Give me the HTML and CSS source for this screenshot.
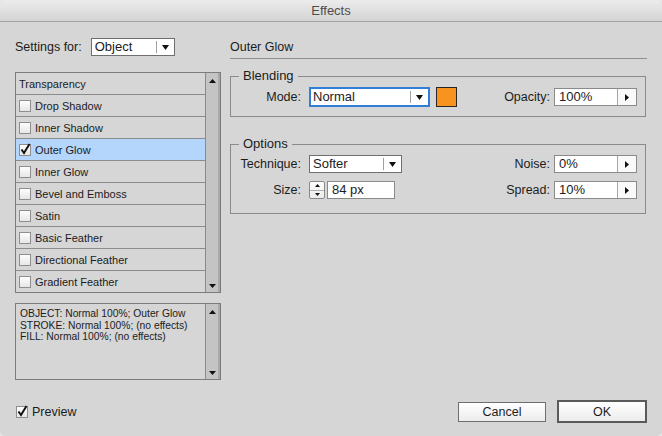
FILE: index.html
```html
<!DOCTYPE html>
<html lang="en">
<head>
    <meta charset="UTF-8">
    <title>Effects</title>
    <link rel="stylesheet" href="styles.css">
</head>
<body>
    <div class="window">
        <div class="titlebar">Effects</div>

        <div class="content">
            <!-- left column: target + effect list + summary -->
            <div class="left">
                <div class="settings">
                    <span class="label">Settings for:</span>
                    <div class="select select-settings">
                        <span class="select-value">Object</span>
                        <span class="select-sep"></span>
                        <span class="select-arrow"><svg width="7" height="5"><polygon points="0,0 7,0 3.5,5"/></svg></span>
                    </div>
                </div>

                <div class="list">
                    <div class="list-items">
                        <div class="row">Transparency</div>
                        <div class="row"><span class="check"></span>Drop Shadow</div>
                        <div class="row"><span class="check"></span>Inner Shadow</div>
                        <div class="row selected"><span class="check checked"><svg width="12" height="12"><path d="M2.5 5.5 L5 9 L10.5 0"/></svg></span>Outer Glow</div>
                        <div class="row"><span class="check"></span>Inner Glow</div>
                        <div class="row"><span class="check"></span>Bevel and Emboss</div>
                        <div class="row"><span class="check"></span>Satin</div>
                        <div class="row"><span class="check"></span>Basic Feather</div>
                        <div class="row"><span class="check"></span>Directional Feather</div>
                        <div class="row"><span class="check"></span>Gradient Feather</div>
                    </div>
                    <div class="scrollbar">
                        <svg width="7" height="4"><polygon points="3.5,0 7,4 0,4"/></svg>
                        <svg width="7" height="4"><polygon points="0,0 7,0 3.5,4"/></svg>
                    </div>
                </div>

                <div class="summary">
                    <div class="summary-text">
                        OBJECT: Normal 100%; Outer Glow<br>
                        STROKE: Normal 100%; (no effects)<br>
                        FILL: Normal 100%; (no effects)
                    </div>
                    <div class="scrollbar">
                        <svg width="7" height="4"><polygon points="3.5,0 7,4 0,4"/></svg>
                        <svg width="7" height="4"><polygon points="0,0 7,0 3.5,4"/></svg>
                    </div>
                </div>
            </div>

            <!-- right column: outer glow settings -->
            <div class="right">
                <h2 class="heading">Outer Glow</h2>

                <fieldset class="group group-blending">
                    <legend>Blending</legend>
                    <div class="line line-tall">
                        <div class="pair">
                            <span class="label label-col">Mode:</span>
                            <div class="select select-mode">
                                <span class="select-value">Normal</span>
                                <span class="select-sep"></span>
                                <span class="select-arrow"><svg width="7" height="5"><polygon points="0,0 7,0 3.5,5"/></svg></span>
                            </div>
                            <span class="swatch"></span>
                        </div>
                        <div class="pair pair-right">
                            <span class="label">Opacity:</span>
                            <div class="field">
                                <span class="field-value">100%</span>
                                <span class="field-btn"><svg width="4" height="7"><polygon points="0,0 4,3.5 0,7"/></svg></span>
                            </div>
                        </div>
                    </div>
                </fieldset>

                <fieldset class="group group-options">
                    <legend>Options</legend>
                    <div class="line">
                        <div class="pair">
                            <span class="label label-col">Technique:</span>
                            <div class="select select-technique">
                                <span class="select-value">Softer</span>
                                <span class="select-sep"></span>
                                <span class="select-arrow"><svg width="7" height="5"><polygon points="0,0 7,0 3.5,5"/></svg></span>
                            </div>
                        </div>
                        <div class="pair pair-right">
                            <span class="label">Noise:</span>
                            <div class="field">
                                <span class="field-value">0%</span>
                                <span class="field-btn"><svg width="4" height="7"><polygon points="0,0 4,3.5 0,7"/></svg></span>
                            </div>
                        </div>
                    </div>
                    <div class="line">
                        <div class="pair">
                            <span class="label label-col">Size:</span>
                            <div class="spinner">
                                <span class="spin"><svg width="5" height="3"><polygon points="2.5,0 5,3 0,3"/></svg></span>
                                <span class="spin"><svg width="5" height="3"><polygon points="0,0 5,0 2.5,3"/></svg></span>
                            </div>
                            <div class="field field-size">
                                <span class="field-value">84 px</span>
                            </div>
                        </div>
                        <div class="pair pair-right">
                            <span class="label">Spread:</span>
                            <div class="field">
                                <span class="field-value">10%</span>
                                <span class="field-btn"><svg width="4" height="7"><polygon points="0,0 4,3.5 0,7"/></svg></span>
                            </div>
                        </div>
                    </div>
                </fieldset>
            </div>
        </div>

        <div class="footer">
            <div class="preview">
                <span class="check checked"><svg width="12" height="12"><path d="M2.5 5.5 L5 9 L10.5 0"/></svg></span>
                <span class="label">Preview</span>
            </div>
            <div class="buttons">
                <button class="button">Cancel</button>
                <button class="button button-default">OK</button>
            </div>
        </div>
    </div>
</body>
</html>
```

FILE: styles.css
```css
body {
    margin: 0;
    background: #e6e6e6;
    font-family: "Liberation Sans", Arial, sans-serif;
    color: #1c1c1c;
}

.window {
    width: 662px;
    height: 436px;
    background: #d6d6d6;
    border-radius: 5px;
    overflow: hidden;
    display: flex;
    flex-direction: column;
}

.titlebar {
    height: 21px;
    line-height: 21px;
    border-bottom: 1px solid #a4a4a4;
    background: linear-gradient(#ececec, #d4d4d4);
    text-align: center;
    font-size: 13px;
    color: #4d4d4d;
}

.content {
    display: flex;
    gap: 9px;
    padding: 16px 15px 0;
}

.left {
    width: 206px;
}

.right {
    width: 417px;
}

.label {
    font-size: 12.5px;
    color: #1c1c1c;
    white-space: nowrap;
}

/* dropdowns */
.settings {
    display: flex;
    align-items: center;
    gap: 9px;
    height: 18px;
}

.select {
    display: flex;
    box-sizing: border-box;
    height: 18px;
    border: 1px solid #6f6f6f;
    background: #fff;
}

.select-settings {
    width: 84px;
}

.select-mode {
    width: 121px;
    height: 20px;
    border: 2px solid #2f7ed8;
}

.select-technique {
    width: 93px;
}

.select-value {
    flex: 1;
    padding-left: 3px;
    font-size: 13px;
    line-height: 16px;
}

.select-mode .select-value {
    padding-left: 2px;
}

.select-sep {
    width: 1px;
    margin: 2px 0;
    background: #a0a0a0;
}

.select-arrow {
    width: 17px;
    display: flex;
    align-items: center;
    justify-content: center;
}

svg polygon {
    fill: #111;
}

/* effect list */
.list {
    display: flex;
    box-sizing: border-box;
    height: 221px;
    margin-top: 16px;
    border: 1px solid #7c7c7c;
}

.list-items {
    flex: 1;
}

.row {
    display: flex;
    align-items: center;
    gap: 4px;
    height: 21px;
    padding-left: 3px;
    border-bottom: 1px solid #8c8c8c;
    font-size: 11px;
}

.row:last-child {
    border-bottom: none;
}

.row.selected {
    background: #b4d6fd;
}

.check {
    display: inline-block;
    box-sizing: border-box;
    width: 12px;
    height: 12px;
    border: 1px solid #8e8e8e;
    background: linear-gradient(#fdfdfd, #e6e6e6);
    position: relative;
}

.check svg {
    position: absolute;
    left: -1px;
    top: -1px;
    overflow: visible;
}

.check svg path {
    fill: none;
    stroke: #111;
    stroke-width: 2;
}

.scrollbar {
    width: 13px;
    border-left: 1px solid #8a8a8a;
    background: #c4c4c4;
    box-shadow: inset -2px 0 0 #a9a9a9;
    display: flex;
    flex-direction: column;
    align-items: center;
    justify-content: space-between;
    padding: 6px 1px 4px 0;
}

/* summary box */
.summary {
    display: flex;
    box-sizing: border-box;
    height: 77px;
    margin-top: 10px;
    border: 1px solid #7c7c7c;
}

.summary-text {
    flex: 1;
    padding: 4px 0 0 4px;
    font-size: 10.3px;
    line-height: 11.6px;
    white-space: nowrap;
}

/* right side */
.heading {
    margin: 0;
    height: 20px;
    line-height: 19px;
    font-size: 12.5px;
    font-weight: normal;
    border-bottom: 1px solid #8e8e8e;
}

.group {
    box-sizing: border-box;
    width: 416px;
    margin: 10px 0 0;
    padding: 4px 8px 9px;
    border: 1px solid #8a8a8a;
    min-width: 0;
}

.group-options {
    margin-top: 20px;
    padding-bottom: 14px;
    display: flex;
    flex-direction: column;
    gap: 8px;
}

.group legend {
    padding: 0 4px;
    font-size: 13px;
    line-height: 14px;
}

.line {
    display: flex;
    justify-content: space-between;
    align-items: center;
    height: 18px;
}

.line-tall {
    height: 20px;
}

.pair {
    display: flex;
    align-items: center;
    gap: 7px;
}

.pair-right {
    gap: 4px;
}

.label-col {
    width: 62px;
    margin-right: 1px;
    text-align: right;
}

.swatch {
    box-sizing: border-box;
    width: 21px;
    height: 20px;
    margin-left: -1px;
    border: 1px solid #262626;
    background: #f7931e;
}

.field {
    display: flex;
    box-sizing: border-box;
    width: 83px;
    height: 18px;
    border: 1px solid #8a8a8a;
    background: #fff;
}

.field-size {
    width: 68px;
}

.field-value {
    flex: 1;
    padding-left: 4px;
    font-size: 13px;
    line-height: 16px;
}

.field-btn {
    width: 18px;
    border-left: 1px solid #a6a6a6;
    background: #f9f9f9;
    display: flex;
    align-items: center;
    justify-content: center;
}

.spinner {
    box-sizing: border-box;
    width: 16px;
    height: 18px;
    margin-right: -5px;
    border: 1px solid #8a8a8a;
    border-radius: 2px;
    background: linear-gradient(#fdfdfd, #ececec);
    display: flex;
    flex-direction: column;
}

.spin {
    flex: 1;
    display: flex;
    align-items: center;
    justify-content: center;
}

.spin:first-child {
    border-bottom: 1px solid #b0b0b0;
}

/* bottom row */
.footer {
    display: flex;
    justify-content: space-between;
    align-items: center;
    height: 23px;
    margin-top: 20px;
    padding: 0 15px 0 16px;
}

.preview {
    display: flex;
    align-items: center;
    gap: 4px;
}

.buttons {
    display: flex;
    align-items: center;
    gap: 11px;
}

.button {
    box-sizing: border-box;
    width: 88px;
    height: 20px;
    padding: 0;
    border: 1px solid #6e6e6e;
    background: linear-gradient(#ffffff, #ececec);
    font-family: "Liberation Sans", Arial, sans-serif;
    font-size: 12.5px;
    color: #1c1c1c;
}

.button-default {
    width: 90px;
    height: 23px;
    border: 2px solid #5a5a5a;
}
```
